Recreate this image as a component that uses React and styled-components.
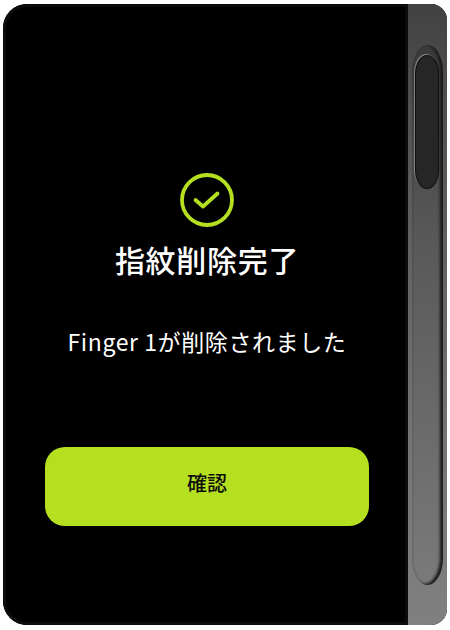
import styled, { createGlobalStyle } from "styled-components";

const GlobalStyle = createGlobalStyle`
  html, body {
    margin: 0;
    padding: 0;
    background: #ffffff;
  }
  body {
    width: 450px;
    height: 630px;
    overflow: hidden;
    font-family: "Noto Sans CJK JP", "Noto Sans", sans-serif;
  }
`;

export default function App() {
  return (
    <>
      <GlobalStyle />
      <Root>
        <Device>
          <Screen>
            <CheckIcon viewBox="0 0 54 54" fill="none">
              <circle cx="27" cy="27" r="25" stroke="#b5e01f" strokeWidth="3.8" />
              <path
                d="M15.5 27 L23 33.5 L37.5 20.5"
                stroke="#b5e01f"
                strokeWidth="3.8"
                strokeLinecap="round"
                strokeLinejoin="round"
              />
            </CheckIcon>
            <Title>指紋削除完了</Title>
            <Message>Finger 1が削除されました</Message>
            <ConfirmButton>確認</ConfirmButton>
          </Screen>
          <Side>
            <Groove>
              <Sensor />
            </Groove>
          </Side>
        </Device>
      </Root>
    </>
  );
}

const Root = styled.main`
  width: 450px;
  height: 630px;
  padding: 4px 3px 5px 3px;
  box-sizing: border-box;
`;

const Device = styled.section`
  width: 100%;
  height: 100%;
  display: flex;
  border-radius: 24px 16px 16px 24px;
  overflow: hidden;
  background: #000;
`;

const Screen = styled.div`
  width: 405px;
  flex-shrink: 0;
  box-sizing: border-box;
  background: #000;
  border-radius: 24px 0 0 24px;
  box-shadow: inset 0 0 0 3px #0c0c0c;
  padding: 169px 39px 0 42px;
  display: flex;
  flex-direction: column;
  align-items: center;
`;

const CheckIcon = styled.svg`
  width: 54px;
  height: 54px;
  flex-shrink: 0;
`;

const Title = styled.h1`
  margin: 12px 0 0 0;
  font-size: 30px;
  font-weight: 500;
  line-height: 40px;
  letter-spacing: 0.7px;
  color: #ffffff;
`;

const Message = styled.p`
  margin: 46px 0 0 0;
  font-size: 23px;
  font-weight: 400;
  line-height: 32px;
  letter-spacing: 0.6px;
  color: #ffffff;
  white-space: nowrap;
`;

const ConfirmButton = styled.button`
  margin-top: 90px;
  width: 324px;
  height: 79px;
  flex-shrink: 0;
  border: none;
  border-radius: 20px;
  background: #b5e01f;
  color: #0c0c0c;
  font-family: "Noto Sans CJK JP", sans-serif;
  font-size: 20px;
  font-weight: 500;
  padding: 0 0 8px 0;
`;

const Side = styled.aside`
  flex: 1;
  box-sizing: border-box;
  padding: 41px 4px 40px 4px;
  background: linear-gradient(180deg, #424242 0%, #5b5b5b 30%, #747474 70%, #808080 100%);
  display: flex;
`;

const Groove = styled.div`
  flex: 1;
  box-sizing: border-box;
  padding: 11px 0 0 4px;
  border-radius: 16px / 28px;
  background: linear-gradient(180deg, #3a3a3a 0%, #585858 35%, #7a7a7a 100%);
  box-shadow:
    inset -3px -1px 3px #1a1a1a,
    inset 1px 0 2px rgba(30, 30, 30, 0.2);
`;

const Sensor = styled.div`
  width: 22px;
  height: 132px;
  border-radius: 11px / 18px;
  background: #262626;
  box-shadow:
    0 0 0 1px #0e0e0e,
    -1px -1px 0 1px rgba(170, 170, 170, 0.6);
`;
